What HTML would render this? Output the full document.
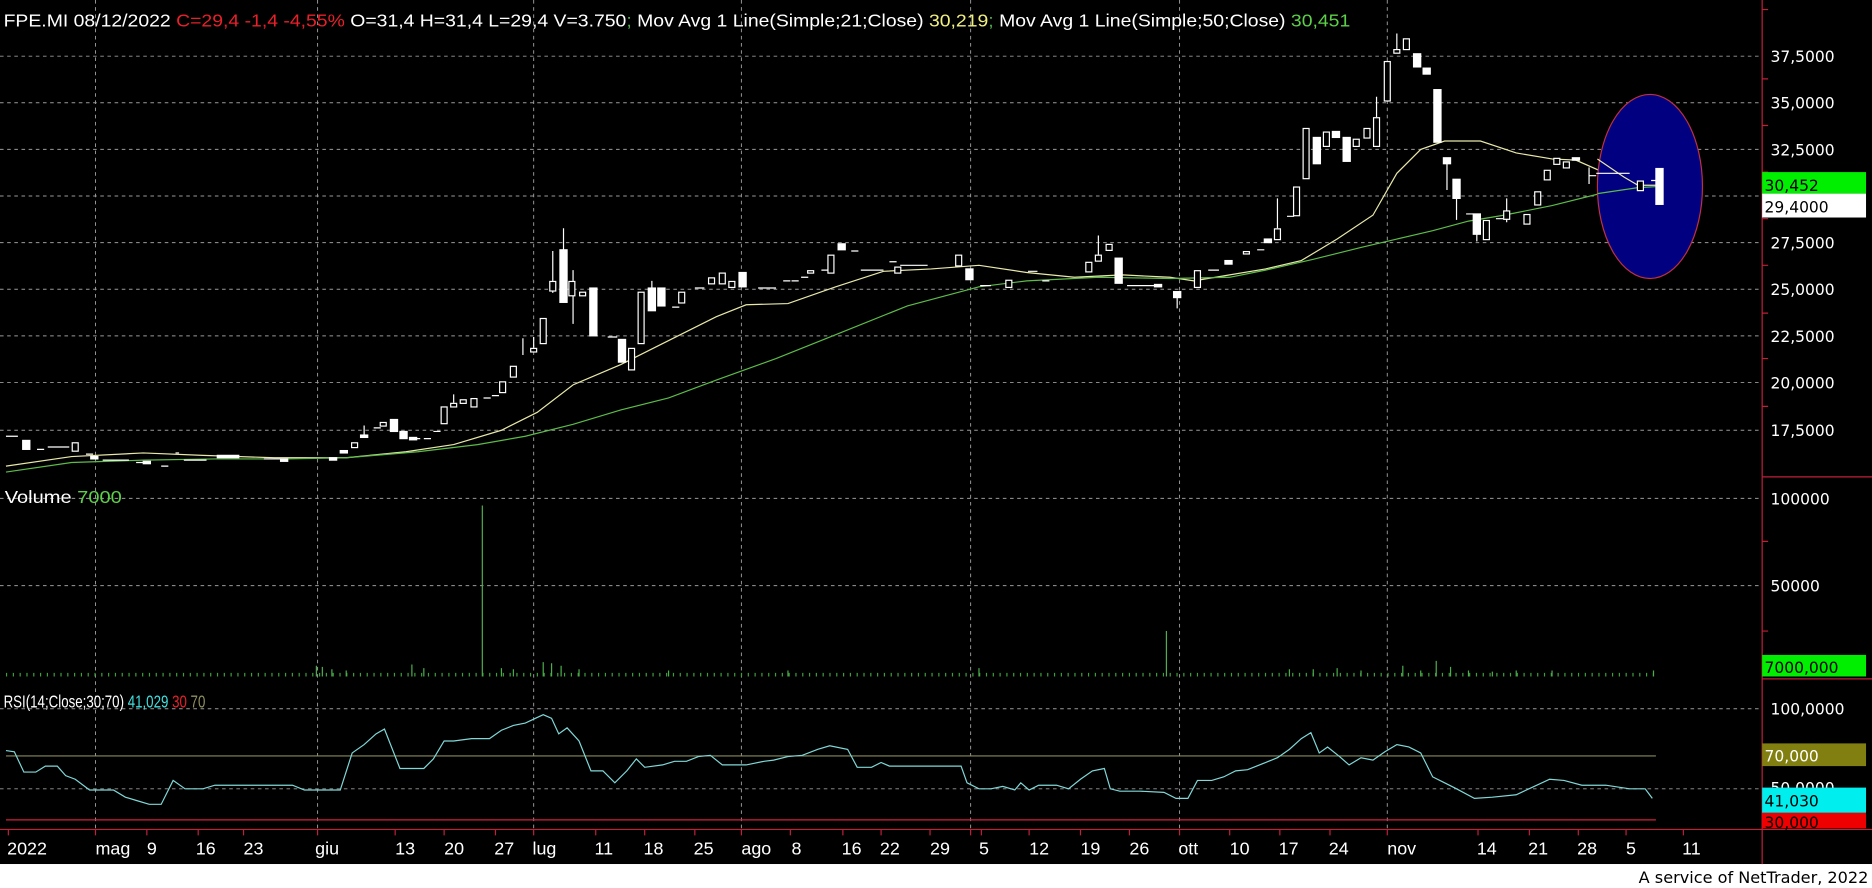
<!DOCTYPE html>
<html><head><meta charset="utf-8"><style>
html,body{margin:0;padding:0;background:#fff;width:1872px;height:888px;overflow:hidden}
svg{display:block}
</style></head><body>
<svg width="1872" height="888" viewBox="0 0 1568 743" preserveAspectRatio="none" xmlns="http://www.w3.org/2000/svg">
<rect x="0" y="0" width="1568" height="723" fill="#000"/>
<rect x="0" y="723" width="1568" height="20" fill="#fff"/>
<g stroke="#9a9a9a" stroke-width="0.8" stroke-dasharray="3 3" fill="none">
<path d="M0 47H1476M0 86H1476M0 125H1476M0 164H1476M0 203H1476M0 242H1476M0 281H1476M0 320H1476M0 360H1476"/>
<path d="M0 417H1476M0 490H1476M0 593H1476M0 660H1476"/>
<path d="M80 0V694M266 0V694M447 0V694M621 0V694M813 0V694M988 0V694M1162 0V694"/>
</g>
<g stroke="#c0203a" stroke-width="1" fill="none">
<path d="M1476 0V723M1476 399H1568M1476 568H1568M0 694H1568"/>
<path d="M1476 8h5M1476 66h5M1476 105h5M1476 144h5M1476 183h5M1476 222h5M1476 262h5M1476 300h5M1476 340h5M1476 453h5M1476 528h5M1476 624h5"/>
<path d="M7 694v5M80 694v5M123 694v5M166 694v5M204 694v5M266 694v5M331 694v5M372 694v5M415 694v5M447 694v5M499 694v5M540 694v5M582 694v5M621 694v5M662 694v5M706 694v5M738 694v5M779 694v5M813 694v5M822 694v5M862 694v5M905 694v5M946 694v5M988 694v5M1030 694v5M1072 694v5M1114 694v5M1162 694v5M1238 694v5M1281 694v5M1322 694v5M1362 694v5M1410 694v5"/>
</g>
<!-- MAs -->
<polyline fill="none" stroke="#e8e8a8" stroke-width="1" points="5,390 60,382 120,379 170,381 230,383 290,383 340,378 380,372 420,360 450,345 480,322 520,305 550,290 600,265 625,255 660,254 700,240 740,227 780,225 820,222 860,228 900,232 940,230 980,232 1000,235 1030,230 1060,225 1090,218 1120,200 1150,180 1170,145 1190,125 1210,118 1240,118 1270,128 1300,133 1320,134 1345,145 1365,155"/>
<polyline fill="none" stroke="#5cbc48" stroke-width="1" points="5,395 60,387 120,385 180,384 240,384 290,383 350,378 400,372 440,365 480,355 520,343 560,333 600,318 650,300 700,280 760,256 820,240 860,235 920,232 980,233 1030,232 1060,226 1100,217 1140,207 1170,200 1200,193 1230,185 1260,180 1300,172 1340,162 1365,157"/>
<ellipse cx="1382" cy="156" rx="44" ry="77" fill="#000080" stroke="#c03040" stroke-width="1"/>
<polyline fill="none" stroke="#e8e8a8" stroke-width="1" points="1338,133 1360,148 1372,155 1390,155"/>
<polyline fill="none" stroke="#5cbc48" stroke-width="1" points="1338,162 1372,157 1390,156"/>
<!-- candles -->
<g stroke="#fff" stroke-width="1" fill="#fff">
<path d="M5 365h10M40 374h18M147 379h3M154 385h19M221 384h14M313 358h6M355 367h6M363 361h6M405 333h6M412 331h6M509 282h8M563 257h6M582 241h8M635 241h15M656 235h6M663 235h6M671 232h6M688 226h6M713 210h6M721 226h19M745 219h6M754 222h23M821 239h9M861 227h8M873 235h6M944 239h23M1012 226h9M1053 209h6M1078 181h6M1228 179h6M1253 183h6M1331 147h6M1337 145h28M1383 151h6M31 376h6M72 380h6M86 385h22M114 387h6M135 390h6M346 367h6M1170 28V44M1153 81V98M1212 137V159M1220 166V184M1237 196V202M1262 166V186M480 226V271M472 191V253M463 210V245M438 283V297M447 282V291M305 356V365M380 330V337M546 235V241M920 197V213M986 249V258M1070 166V191M1331 140V154"/>
<rect x="19" y="368.5" width="6" height="7.5"/><rect x="76" y="382" width="6" height="2"/><rect x="120" y="386" width="6" height="2"/><rect x="182" y="381" width="18" height="2"/><rect x="235" y="384" width="6" height="2"/><rect x="276" y="383" width="6" height="2"/><rect x="285" y="377" width="6" height="2"/><rect x="302" y="364" width="6" height="2"/><rect x="327" y="351" width="6" height="10"/><rect x="335" y="361" width="6" height="6"/><rect x="343" y="366" width="6" height="2"/><rect x="494" y="241" width="6" height="40"/><rect x="518" y="284" width="6" height="19"/><rect x="543" y="241" width="6" height="19"/><rect x="551" y="241" width="6" height="15"/><rect x="619" y="228" width="6" height="12"/><rect x="702" y="204" width="6" height="5"/><rect x="809" y="225" width="6" height="9"/><rect x="934" y="216" width="6" height="21"/><rect x="967" y="238" width="6" height="2"/><rect x="983" y="244" width="6" height="5"/><rect x="1026" y="218" width="6" height="3"/><rect x="1059" y="200" width="6" height="3"/><rect x="1100" y="115" width="6" height="22"/><rect x="1116" y="110" width="6" height="5"/><rect x="1125" y="115" width="6" height="20"/><rect x="1184" y="45" width="6" height="11"/><rect x="1192" y="57" width="6" height="5"/><rect x="1201" y="75" width="6" height="44"/><rect x="1209" y="132" width="6" height="5"/><rect x="1217" y="150" width="6" height="16"/><rect x="1234" y="179" width="6" height="17"/><rect x="1317" y="132" width="6" height="2"/><rect x="1387" y="141" width="6" height="30"/><rect x="469" y="209" width="6" height="44"/>
</g>
<g stroke="#fff" stroke-width="1" fill="#000">
<rect x="60.5" y="370.5" width="5" height="7"/><rect x="294.5" y="370.5" width="5" height="4"/><rect x="318.5" y="353.5" width="5" height="3"/><rect x="369.5" y="340.5" width="5" height="14"/><rect x="377.5" y="337.5" width="5" height="3"/><rect x="385.5" y="334.5" width="5" height="3"/><rect x="394.5" y="333.5" width="5" height="7"/><rect x="418.5" y="319.5" width="5" height="9"/><rect x="427.5" y="306.5" width="5" height="9"/><rect x="444.5" y="291.5" width="5" height="3"/><rect x="452.5" y="266.5" width="5" height="21"/><rect x="460.5" y="235.5" width="5" height="8"/><rect x="476.5" y="235.5" width="5" height="12"/><rect x="485.5" y="244.5" width="5" height="3"/><rect x="526.5" y="291.5" width="5" height="18"/><rect x="534.5" y="244.5" width="5" height="43"/><rect x="568.5" y="244.5" width="5" height="9"/><rect x="593.5" y="232.5" width="5" height="5"/><rect x="602.5" y="228.5" width="5" height="9"/><rect x="610.5" y="235.5" width="5" height="5"/><rect x="676.5" y="226.5" width="5" height="2"/><rect x="693.5" y="213.5" width="5" height="15"/><rect x="749.5" y="223.5" width="5" height="5"/><rect x="800.5" y="213.5" width="5" height="9"/><rect x="842.5" y="234.5" width="5" height="6"/><rect x="909.5" y="219.5" width="5" height="8"/><rect x="917.5" y="213.5" width="5" height="5"/><rect x="926.5" y="204.5" width="5" height="5"/><rect x="1000.5" y="226.5" width="5" height="14"/><rect x="1041.5" y="210.5" width="5" height="2"/><rect x="1067.5" y="191.5" width="5" height="9"/><rect x="1083.5" y="156.5" width="5" height="24"/><rect x="1091.5" y="107.5" width="5" height="42"/><rect x="1108.5" y="110.5" width="5" height="12"/><rect x="1133.5" y="116.5" width="5" height="6"/><rect x="1142.5" y="107.5" width="5" height="8"/><rect x="1150.5" y="98.5" width="5" height="24"/><rect x="1159.5" y="51.5" width="5" height="33"/><rect x="1167.5" y="41.5" width="5" height="3"/><rect x="1175.5" y="32.5" width="5" height="9"/><rect x="1242.5" y="184.5" width="5" height="16"/><rect x="1259.5" y="176.5" width="5" height="7"/><rect x="1276.5" y="179.5" width="5" height="8"/><rect x="1285.5" y="160.5" width="5" height="11"/><rect x="1293.5" y="142.5" width="5" height="8"/><rect x="1301.5" y="132.5" width="5" height="5"/><rect x="1309.5" y="135.5" width="5" height="5"/><rect x="1371.5" y="151.5" width="5" height="8"/>
</g>
<!-- volume -->
<line x1="5" y1="564.5" x2="1388" y2="564.5" stroke="#3f9f3f" stroke-width="3" stroke-dasharray="1 4.7"/>
<g stroke="#4caf4c" stroke-width="1">
<path d="M404 423V566M977 528V566M265 557V566M270 558V566M345 556V566M355 559V566M455 554V566M462 555V566M470 557V566M820 559V566M1080 560V566M1100 560V566M1120 559V566M1175 557V566M1203 553V566M1215 558V566M1190 561V566M1250 562V566M1270 561V566M1300 561V566M1385 561V566M278 560V566M290 561V566M420 559V566M430 560V566M485 560V566M560 561V566M660 561V566M1140 561V566M1230 561V566"/>
</g>
<!-- RSI -->
<line x1="5" y1="632.5" x2="1387" y2="632.5" stroke="#8a8a5a" stroke-width="1"/>
<line x1="5" y1="686" x2="1387" y2="686" stroke="#d0203a" stroke-width="1"/>
<polyline fill="none" stroke="#80d8d8" stroke-width="1" points="5,628 12,629 20,646 30,646 38,641 48,641 55,649 63,652 75,661 95,661 105,667 115,670 125,673 135,673 145,653 155,660 170,660 180,657 245,657 255,661 285,661 295,630 305,623 315,614 322,610 335,643 345,643 355,643 363,635 372,620 380,620 395,618 410,618 420,611 430,607 440,605 455,598 462,601 468,614 475,609 485,620 495,645 505,645 515,655 525,645 533,635 540,642 555,640 565,637 575,637 585,633 595,632 605,640 615,640 625,640 640,637 648,636 660,633 672,632 685,627 695,624 710,627 718,642 730,642 738,638 745,641 805,641 810,655 820,660 830,660 840,658 850,661 855,655 862,661 870,657 885,657 895,660 905,652 915,645 925,643 930,660 938,662 955,662 975,663 985,668 995,668 1003,653 1015,653 1025,650 1035,645 1045,644 1060,638 1070,634 1080,627 1090,618 1098,613 1105,630 1112,625 1122,633 1130,640 1140,634 1150,636 1160,629 1170,623 1180,625 1190,630 1200,650 1210,655 1220,660 1235,668 1250,667 1270,665 1285,658 1298,652 1310,653 1325,657 1345,657 1365,660 1378,660 1384,668"/>
<!-- header -->
<text x="3" y="22" font-family="Liberation Sans, sans-serif" font-size="15" fill="#fff" textLength="1128" lengthAdjust="spacingAndGlyphs">FPE.MI 08/12/2022 <tspan fill="#e8202a">C=29,4 -1,4 -4,55%</tspan> O=31,4 H=31,4 L=29,4 V=3.750<tspan fill="#4caf4c">;</tspan> Mov Avg 1 Line(Simple;21;Close) <tspan fill="#f0f080">30,219</tspan><tspan fill="#4caf4c">;</tspan> Mov Avg 1 Line(Simple;50;Close) <tspan fill="#5cd048">30,451</tspan></text>
<text x="4" y="421" font-family="Liberation Sans, sans-serif" font-size="15" fill="#fff" textLength="98" lengthAdjust="spacingAndGlyphs">Volume <tspan fill="#5cd048">7000</tspan></text>
<text x="3" y="592" font-family="Liberation Sans, sans-serif" font-size="15" fill="#fff" textLength="169" lengthAdjust="spacingAndGlyphs">RSI(14;Close;30;70) <tspan fill="#40e0e0">41,029</tspan> <tspan fill="#e8202a">30</tspan> <tspan fill="#909060">70</tspan></text>
<!-- right axis -->
<g font-family="DejaVu Sans, sans-serif" font-size="13" fill="#fff">
<text x="1483" y="52">37,5000</text><text x="1483" y="91">35,0000</text><text x="1483" y="130">32,5000</text><text x="1483" y="208">27,5000</text><text x="1483" y="247">25,0000</text><text x="1483" y="286">22,5000</text><text x="1483" y="325">20,0000</text><text x="1483" y="365">17,5000</text>
<text x="1483" y="422">100000</text><text x="1483" y="495">50000</text><text x="1483" y="598">100,0000</text><text x="1483" y="664">50,0000</text>
</g>
<rect x="1476" y="144" width="87" height="18" fill="#00ee00"/>
<text x="1478" y="160" font-family="DejaVu Sans, sans-serif" font-size="13" fill="#000">30,452</text>
<rect x="1476" y="162" width="87" height="20" fill="#fff"/>
<text x="1478" y="178" font-family="DejaVu Sans, sans-serif" font-size="13" fill="#000">29,4000</text>
<rect x="1476" y="548" width="87" height="18" fill="#00ee00"/>
<text x="1478" y="563" font-family="DejaVu Sans, sans-serif" font-size="13" fill="#000">7000,000</text>
<rect x="1476" y="622" width="87" height="19" fill="#807f10"/>
<text x="1478" y="637" font-family="DejaVu Sans, sans-serif" font-size="13" fill="#fff">70,000</text>
<rect x="1476" y="680" width="87" height="13" fill="#ee0000"/>
<text x="1478" y="693" font-family="DejaVu Sans, sans-serif" font-size="13" fill="#000">30,000</text>
<rect x="1476" y="659" width="87" height="21" fill="#00eeee"/>
<text x="1478" y="675" font-family="DejaVu Sans, sans-serif" font-size="13" fill="#000">41,030</text>
<!-- dates -->
<g font-family="Liberation Sans, sans-serif" font-size="15" fill="#fff">
<text x="6" y="715">2022</text><text x="80" y="715">mag</text><text x="123" y="715">9</text><text x="164" y="715">16</text><text x="204" y="715">23</text><text x="264" y="715">giu</text><text x="331" y="715">13</text><text x="372" y="715">20</text><text x="414" y="715">27</text><text x="446" y="715">lug</text><text x="498" y="715">11</text><text x="539" y="715">18</text><text x="581" y="715">25</text><text x="621" y="715">ago</text><text x="663" y="715">8</text><text x="705" y="715">16</text><text x="737" y="715">22</text><text x="779" y="715">29</text><text x="820" y="715">5</text><text x="862" y="715">12</text><text x="905" y="715">19</text><text x="946" y="715">26</text><text x="987" y="715">ott</text><text x="1030" y="715">10</text><text x="1071" y="715">17</text><text x="1113" y="715">24</text><text x="1162" y="715">nov</text><text x="1237" y="715">14</text><text x="1280" y="715">21</text><text x="1321" y="715">28</text><text x="1362" y="715">5</text><text x="1409" y="715">11</text>
</g>
<text x="1565" y="739" text-anchor="end" font-family="DejaVu Sans, sans-serif" font-size="13.5" fill="#000">A service of NetTrader, 2022</text>
</svg>
</body></html>
